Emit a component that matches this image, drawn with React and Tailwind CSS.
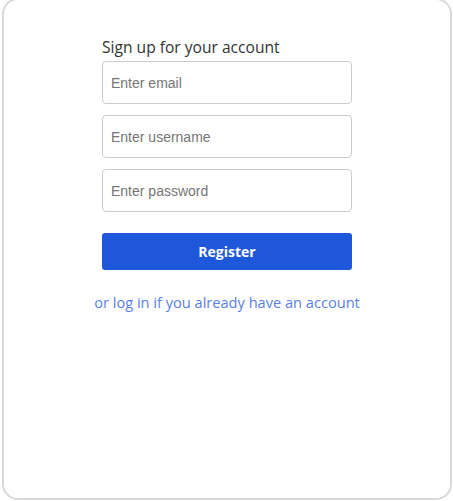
export default function App() {
  return (
    <div className="h-[501px] overflow-hidden bg-white pl-[2px] pr-[1px]">
      <div className="-mt-[2px] h-[502px] rounded-2xl border-2 border-[#d9d9d9] bg-white">
        <div className="mx-auto flex w-[250px] flex-col pt-[36px]">
          <h1 className="mb-[3px] font-['Open_Sans',sans-serif] text-[15.6px] leading-[22px] text-[#333]">
            Sign up for your account
          </h1>
          <div className="flex flex-col gap-[11px]">
            <input
              type="email"
              placeholder="Enter email"
              className="h-[43px] w-full rounded border border-[#ccc] px-2 font-['Liberation_Sans',sans-serif] text-[14px] placeholder:text-[#757575] focus:outline-none"
            />
            <input
              type="text"
              placeholder="Enter username"
              className="h-[43px] w-full rounded border border-[#ccc] px-2 font-['Liberation_Sans',sans-serif] text-[14px] placeholder:text-[#757575] focus:outline-none"
            />
            <input
              type="password"
              placeholder="Enter password"
              className="h-[43px] w-full rounded border border-[#ccc] px-2 font-['Liberation_Sans',sans-serif] text-[14px] placeholder:text-[#757575] focus:outline-none"
            />
          </div>
          <button className="mt-[21px] h-[37px] w-full rounded-[3px] bg-[#1f57db] font-['Open_Sans',sans-serif] text-[14px] font-bold text-white">
            Register
          </button>
        </div>
        <p className="mt-[22px] text-center font-['Open_Sans',sans-serif] text-[14.6px] text-[#5a7fe6]">
          or log in if you already have an account
        </p>
      </div>
    </div>
  );
}
